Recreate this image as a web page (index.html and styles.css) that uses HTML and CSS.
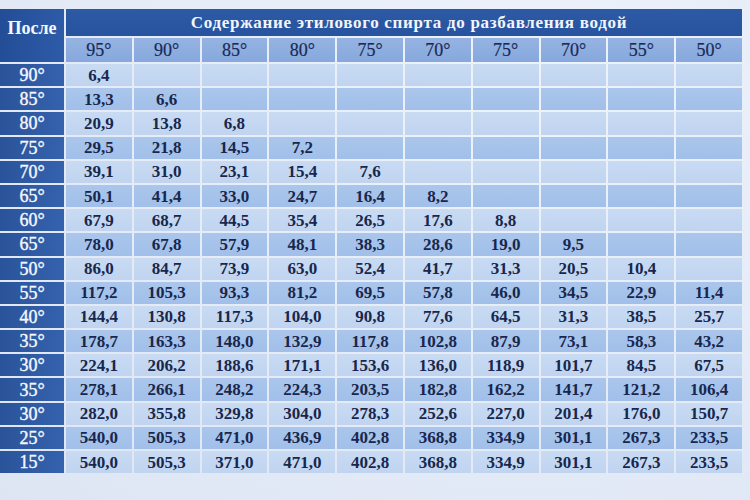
FILE: index.html
```html
<!DOCTYPE html>
<html lang="ru">
<head>
<meta charset="utf-8">
<title>Таблица разбавления спирта</title>
<link rel="stylesheet" href="styles.css">
</head>
<body>
<table class="dilution">
  <colgroup>
    <col class="c-side">
    <col class="c-data"><col class="c-data"><col class="c-data"><col class="c-data"><col class="c-data">
    <col class="c-data"><col class="c-data"><col class="c-data"><col class="c-data"><col class="c-data">
  </colgroup>
  <thead>
    <tr class="h1">
      <th class="side-head" rowspan="2">После</th>
      <th class="title" colspan="10">Содержание этилового спирта до разбавления водой</th>
    </tr>
    <tr class="h2">
      <th>95°</th><th>90°</th><th>85°</th><th>80°</th><th>75°</th>
      <th>70°</th><th>75°</th><th>70°</th><th>55°</th><th>50°</th>
    </tr>
  </thead>
  <tbody>
    <tr><th>90°</th><td>6,4</td><td></td><td></td><td></td><td></td><td></td><td></td><td></td><td></td><td></td></tr>
    <tr><th>85°</th><td>13,3</td><td>6,6</td><td></td><td></td><td></td><td></td><td></td><td></td><td></td><td></td></tr>
    <tr><th>80°</th><td>20,9</td><td>13,8</td><td>6,8</td><td></td><td></td><td></td><td></td><td></td><td></td><td></td></tr>
    <tr><th>75°</th><td>29,5</td><td>21,8</td><td>14,5</td><td>7,2</td><td></td><td></td><td></td><td></td><td></td><td></td></tr>
    <tr><th>70°</th><td>39,1</td><td>31,0</td><td>23,1</td><td>15,4</td><td>7,6</td><td></td><td></td><td></td><td></td><td></td></tr>
    <tr><th>65°</th><td>50,1</td><td>41,4</td><td>33,0</td><td>24,7</td><td>16,4</td><td>8,2</td><td></td><td></td><td></td><td></td></tr>
    <tr><th>60°</th><td>67,9</td><td>68,7</td><td>44,5</td><td>35,4</td><td>26,5</td><td>17,6</td><td>8,8</td><td></td><td></td><td></td></tr>
    <tr><th>65°</th><td>78,0</td><td>67,8</td><td>57,9</td><td>48,1</td><td>38,3</td><td>28,6</td><td>19,0</td><td>9,5</td><td></td><td></td></tr>
    <tr><th>50°</th><td>86,0</td><td>84,7</td><td>73,9</td><td>63,0</td><td>52,4</td><td>41,7</td><td>31,3</td><td>20,5</td><td>10,4</td><td></td></tr>
    <tr><th>55°</th><td>117,2</td><td>105,3</td><td>93,3</td><td>81,2</td><td>69,5</td><td>57,8</td><td>46,0</td><td>34,5</td><td>22,9</td><td>11,4</td></tr>
    <tr><th>40°</th><td>144,4</td><td>130,8</td><td>117,3</td><td>104,0</td><td>90,8</td><td>77,6</td><td>64,5</td><td>31,3</td><td>38,5</td><td>25,7</td></tr>
    <tr><th>35°</th><td>178,7</td><td>163,3</td><td>148,0</td><td>132,9</td><td>117,8</td><td>102,8</td><td>87,9</td><td>73,1</td><td>58,3</td><td>43,2</td></tr>
    <tr><th>30°</th><td>224,1</td><td>206,2</td><td>188,6</td><td>171,1</td><td>153,6</td><td>136,0</td><td>118,9</td><td>101,7</td><td>84,5</td><td>67,5</td></tr>
    <tr><th>35°</th><td>278,1</td><td>266,1</td><td>248,2</td><td>224,3</td><td>203,5</td><td>182,8</td><td>162,2</td><td>141,7</td><td>121,2</td><td>106,4</td></tr>
    <tr><th>30°</th><td>282,0</td><td>355,8</td><td>329,8</td><td>304,0</td><td>278,3</td><td>252,6</td><td>227,0</td><td>201,4</td><td>176,0</td><td>150,7</td></tr>
    <tr><th>25°</th><td>540,0</td><td>505,3</td><td>471,0</td><td>436,9</td><td>402,8</td><td>368,8</td><td>334,9</td><td>301,1</td><td>267,3</td><td>233,5</td></tr>
    <tr><th>15°</th><td>540,0</td><td>505,3</td><td>371,0</td><td>471,0</td><td>402,8</td><td>368,8</td><td>334,9</td><td>301,1</td><td>267,3</td><td>233,5</td></tr>
  </tbody>
</table>
</body>
</html>
```

FILE: styles.css
```css
html, body {
  margin: 0;
  padding: 0;
  height: 100%;
}
body {
  background: radial-gradient(ellipse at 70% 20%, #eef3fb 0%, #e4ebf7 60%, #dde5f3 100%);
  font-family: "Liberation Serif", Tinos, "Times New Roman", "DejaVu Serif", serif;
  overflow: hidden;
}
.dilution {
  border-collapse: separate;
  border-spacing: 2px;
  table-layout: fixed;
  width: 746px;
  margin: 7px 0 0 -2px;
  font-family: "Liberation Serif", Tinos, "Times New Roman", "DejaVu Serif", serif;
}
.c-side { width: 64px; }
.dilution th,
.dilution td {
  padding: 0;
  text-align: center;
  vertical-align: middle;
  line-height: 1;
  font-family: "Liberation Serif", Tinos, "Times New Roman", "DejaVu Serif", serif;
}
.h1 { height: 27px; }
.h2 { height: 24px; }
.dilution tbody tr { height: 22.2px; }

.side-head {
  background: linear-gradient(90deg, #234d96 0%, #2e5ba8 100%);
  color: #f4f7fc;
  font-size: 18px;
  font-weight: bold;
  vertical-align: top !important;
  padding-top: 10px !important;
}
.title {
  background: linear-gradient(180deg, #2d5aa5 0%, #28539e 100%);
  color: #f2f5fb;
  font-size: 17px;
  font-weight: bold;
  letter-spacing: 0.7px;
  padding-left: 10px !important;
}
.h2 th {
  background: linear-gradient(180deg, #95b4e2 0%, #86a8dc 100%);
  color: #1a2a57;
  font-size: 18px;
  font-weight: normal;
  -webkit-text-stroke: 0.2px #1a2a57;
}
.dilution tbody th {
  background: linear-gradient(90deg, #2a5399 0%, #3562ae 100%);
  color: #f4f7fc;
  font-size: 18px;
  font-weight: normal;
  -webkit-text-stroke: 0.4px #f4f7fc;
}
.dilution tbody td {
  color: #18274d;
  font-size: 17px;
  font-weight: bold;
}
.dilution tbody tr:nth-child(odd) td {
  background: linear-gradient(180deg, #c9dbf3 0%, #c0d4f0 100%);
}
.dilution tbody tr:nth-child(even) td {
  background: linear-gradient(180deg, #aac6ec 0%, #a1bfe9 100%);
}
```
